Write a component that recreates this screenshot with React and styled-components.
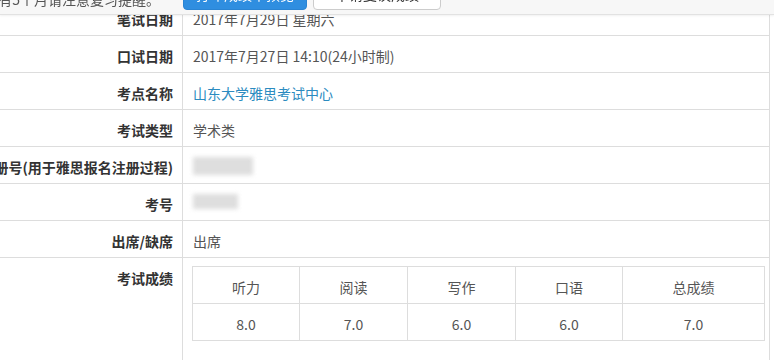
import styled, { createGlobalStyle } from "styled-components";

const GlobalStyle = createGlobalStyle`
  body {
    margin: 0;
    overflow: hidden;
    background: #fff;
    font-family: "Noto Sans CJK SC", "Liberation Sans", sans-serif;
    color: #333;
  }
`;

const TopBar = styled.div`
  position: fixed;
  top: -20px;
  left: 0;
  right: 0;
  height: 34px;
  background: #f7f7f7;
  border-bottom: 1px solid #e2e2e2;
  box-shadow: 0 1px 2px rgba(0, 0, 0, 0.06);
  display: flex;
  align-items: center;
  z-index: 2;
`;

const Notice = styled.div`
  width: 160px;
  padding-right: 15px;
  display: flex;
  justify-content: flex-end;
  font-size: 14px;
  color: #555;
  white-space: nowrap;
  margin-top: 4px;
`;

const BarButton = styled.div`
  margin-left: ${(p) => p.$gap}px;
  width: ${(p) => p.$w}px;
  height: 32px;
  box-sizing: border-box;
  margin-top: -6px;
  border-radius: 4px;
  font-size: 14px;
  display: flex;
  align-items: center;
  justify-content: center;
  background: ${(p) => (p.$primary ? "#2f8ee0" : "#fff")};
  color: ${(p) => (p.$primary ? "#fff" : "#333")};
  border: 1px solid ${(p) => (p.$primary ? "#2a84d3" : "#ccc")};
`;

const Page = styled.div`
  margin-top: -1px;
  width: 769px;
  border-right: 1px solid #ddd;
`;

const Row = styled.div`
  display: grid;
  grid-template-columns: 183px 1fr;
  border-bottom: 1px solid #ddd;
`;

const Label = styled.div`
  display: flex;
  justify-content: flex-end;
  border-right: 1px solid #ddd;
  padding: 10px 9px 6px 0;
  line-height: 20px;
  font-size: 14px;
  font-weight: bold;
  color: #333;
  white-space: nowrap;
  min-height: 20px;
`;

const Value = styled.div`
  padding: ${(p) => (p.$table ? "8px 9px 20px 9px" : "10px 10px 6px 10px")};
  line-height: 20px;
  font-size: 14px;
  color: ${(p) => (p.$link ? "#2b8bc0" : "#555")};
  white-space: nowrap;
`;

const Hidden = styled.div`
  width: ${(p) => p.$w}px;
  height: ${(p) => p.$h}px;
  margin-top: ${(p) => p.$top}px;
  background: #d6d6d6;
  filter: blur(2px);
  opacity: 0.8;
`;

const Scores = styled.table`
  border-collapse: collapse;
  width: 567px;
  table-layout: fixed;
`;

const Cell = styled.td`
  border: 1px solid #ddd;
  text-align: center;
  padding: 10px 0 6px;
  line-height: 20px;
  font-size: 14px;
  color: #555;
  width: ${(p) => p.$w}px;
`;

const rows = [
  ["笔试日期", "2017年7月29日 星期六"],
  ["口试日期", "2017年7月27日 14:10(24小时制)"],
  ["考点名称", "山东大学雅思考试中心", "link"],
  ["考试类型", "学术类"],
  ["注册号(用于雅思报名注册过程)", null, "reg"],
  ["考号", null, "id"],
  ["出席/缺席", "出席"],
];

const heads = ["听力", "阅读", "写作", "口语", "总成绩"];
const marks = ["8.0", "7.0", "6.0", "6.0", "7.0"];
const widths = [106, 107, 107, 106, 141];

export default function App() {
  return (
    <>
      <GlobalStyle />
      <TopBar>
        <Notice>距离下次考试还有5个月请注意复习提醒。</Notice>
        <BarButton $primary $gap={8} $w={124}>打印成绩单预览</BarButton>
        <BarButton $gap={6} $w={128}>申请复议成绩</BarButton>
      </TopBar>
      <Page>
        {rows.map(([label, value, kind]) => (
          <Row key={label}>
            <Label>{label}</Label>
            <Value $link={kind === "link"}>
              {kind === "reg" && <Hidden $w={60} $h={18} $top={0} />}
              {kind === "id" && <Hidden $w={45} $h={15} $top={0} />}
              {value}
            </Value>
          </Row>
        ))}
        <Row>
          <Label>考试成绩</Label>
          <Value $table>
            <Scores>
              <tbody>
                <tr>
                  {heads.map((h, i) => (
                    <Cell key={h} $w={widths[i]}>{h}</Cell>
                  ))}
                </tr>
                <tr>
                  {marks.map((m, i) => (
                    <Cell key={i} $w={widths[i]}>{m}</Cell>
                  ))}
                </tr>
              </tbody>
            </Scores>
          </Value>
        </Row>
      </Page>
    </>
  );
}
